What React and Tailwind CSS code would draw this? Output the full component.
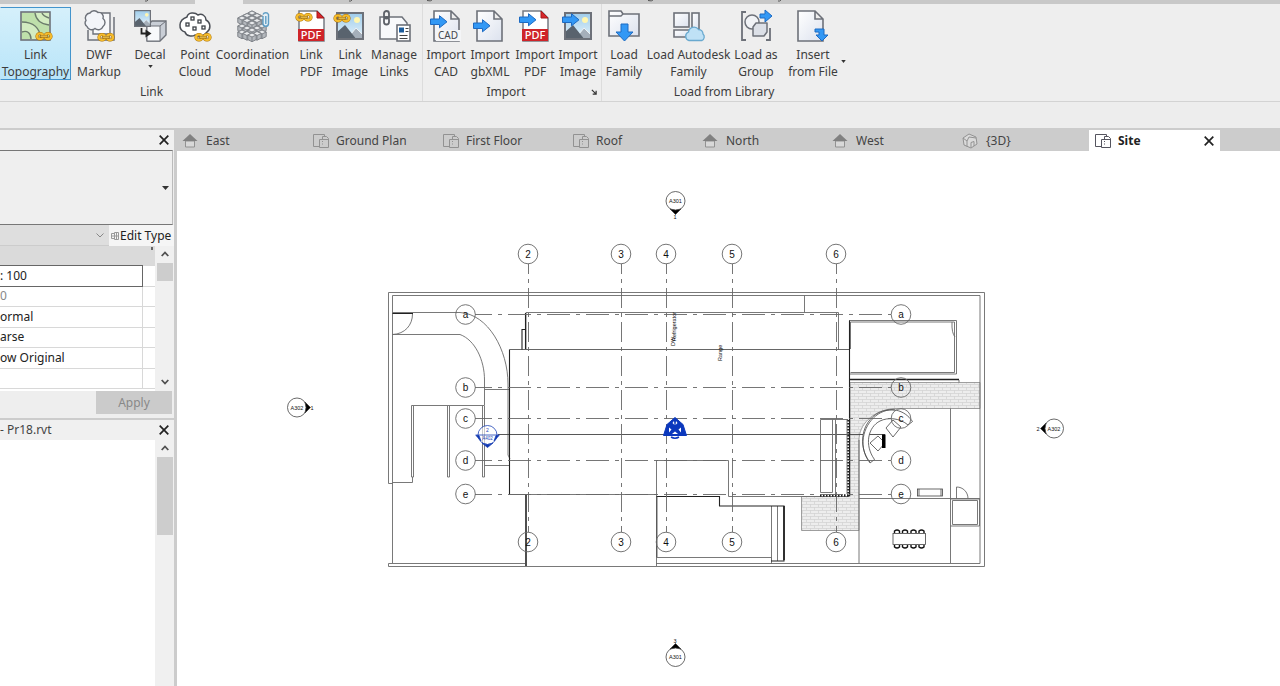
import React from 'react';

const STROKE = '#6d7179';

function Chain({ x = 0, y = 0 }) {
    return (
        <g transform={`translate(${x} ${y})`} fill="none">
            <g stroke="#a8700a" strokeWidth="3.2">
                <rect x="1" y="1.500" width="6" height="5.500" rx="2.700" />
                <rect x="9" y="1.500" width="6" height="5.500" rx="2.700" />
            </g>
            <g stroke="#f6bd2d" strokeWidth="2.200">
                <rect x="1" y="1.500" width="6" height="5.500" rx="2.700" />
                <rect x="9" y="1.500" width="6" height="5.500" rx="2.700" />
            </g>
            <path d="M5 4.200h6" stroke="#8a5c08" strokeWidth="2.600" strokeLinecap="round" />
            <path d="M5 4.200h6" stroke="#fad25c" strokeWidth="1.200" strokeLinecap="round" />
        </g>
    );
}

function BlueArrow({ x = 0, y = 0 }) {
    return (
        <path
            transform={`translate(${x} ${y})`}
            d="M.5 4h9V.7L17 6.8l-7.5 6V9.5h-9z"
            fill="#3298f5"
            stroke="#1d6ac2"
        />
    );
}

function Landscape({ x = 2, y = 2, w = 28, h = 28 }) {
    return (
        <svg x={x} y={y} width={w} height={h} viewBox="0 0 28 28">
            <rect width="28" height="28" fill="url(#sky)" />
            <circle cx="21" cy="8" r="3" fill="#fff6b0" />
            <path d="M10 28l10-12 8 8v4z" fill="#a5afba" stroke="#eef2f5" />
            <path d="M0 21l9-8 12 15H0z" fill="#59636e" />
            <rect x="1" y="1" width="26" height="26" fill="none" stroke={STROKE} strokeWidth="2" />
        </svg>
    );
}

function PdfPage() {
    return (
        <g>
            <path d="M4 1h18l7 7v23H4z" fill="#fff" stroke="#777b82" strokeWidth="1.5" />
            <path d="M22 1l7 7h-7z" fill="#d8272b" stroke="#a51a1d" />
            <rect x="3" y="19" width="26" height="12" fill="#cf2429" />
            <text x="16" y="29" textAnchor="middle" fontSize="11" fontFamily="Noto Sans, sans-serif" fontWeight="500" fill="#fff">PDF</text>
        </g>
    );
}

function BlankPage({ x = 4 }) {
    return (
        <path
            transform={`translate(${x} 0)`}
            d="M1 1h17l8 8v22H1zM18 1v8h8"
            fill="url(#paper)"
            stroke={STROKE}
            strokeWidth="1.6"
        />
    );
}

function Cube({ x, y }) {
    return (
        <g transform={`translate(${x} ${y})`} stroke="#7f8389" strokeWidth="1" strokeLinejoin="round">
            <path d="M0 0l4.200 2v4.600L0 8.700l-4.200-2.100V2z" fill="#b4b8bd" />
            <path d="M0 0l4.200 2L0 4l-4.200-2z" fill="#e8eaec" />
            <path d="M0 4v4.700" />
        </g>
    );
}

const cubes = [
    [15, 1], [10, 3.500], [20, 3.500], [5, 6], [15, 6], [25, 6], [10, 8.500], [20, 8.500], [15, 11],
    [5, 14], [25, 14], [10, 16], [20, 16], [15, 18],
    [5, 20], [25, 20], [10, 21.500], [20, 21.500], [15, 23],
];

const icons = {
    topography: (
        <>
            <rect x="1" y="2" width="29" height="28" fill="#d3ecc1" stroke={STROKE} strokeWidth="1.6" />
            <path d="M2 3h13c1 7 6 11 14 12v14h-8C20 18 13 12 2 12z" fill="#bfe0ab" />
            <path d="M2 22c5-2 9 1 9 7H2z" fill="#bfe0ab" />
            <path d="M2 12c11 0 18 6 19 17M15 3c1 7 6 11 14 12M2 22c5-2 9 1 9 7M22 3c1 3 4 4 7 5" fill="none" stroke="#6b7b6b" strokeWidth="1.4" />
            <Chain x={16} y={22} />
        </>
    ),
    dwf: (
        <>
            <path d="M10 3h17v21H10z" fill="#f7f8fa" stroke={STROKE} strokeWidth="1.4" />
            <path d="M31 7v23H5V20" fill="none" stroke={STROKE} strokeWidth="1.5" />
            <path d="M7 3a5 5 0 0 1 8-.5 4.500 4.500 0 0 1 5 6 5 5 0 0 1 0 8 5 5 0 0 1-8 2 5 5 0 0 1-8-2 4 4 0 0 1-1-6 5 5 0 0 1 4-7.500z" fill="#f3f5f9" stroke={STROKE} strokeWidth="1.4" />
            <Chain x={15} y={23} />
        </>
    ),
    decal: (
        <>
            <path d="M13 16l5-5h14v14l-6 6H13z" fill="#c9ced6" stroke={STROKE} strokeWidth="1.4" />
            <path d="M13 16h13v15H13z" fill="#f8f9fb" stroke={STROKE} />
            <path d="M26 16l6-5" stroke={STROKE} />
            <Landscape x={0} y={0} w={17} h={17} />
            <path d="M7.500 18v5.500h5" fill="none" stroke="#222" strokeWidth="1.8" />
            <path d="M11.500 19.500l6 4-6 4z" fill="#222" />
        </>
    ),
    cloud: (
        <>
            <path d="M8 7c1-5 8-5 11-2 4-2 8 1 8 5 5 3 5 9 1 12-3 5-9 5-12 3-3 2-9 1-10-3-7-2-7-12 2-15z" fill="#fff" stroke="#4b4f56" strokeWidth="1.5" />
            <g fill="#fff" stroke="#3e4248" strokeWidth="1.3">
                <rect x="12" y="7" width="3" height="3" />
                <rect x="19" y="10" width="3" height="3" />
                <rect x="7" y="13" width="3" height="3" />
                <rect x="14" y="17" width="3" height="3" />
                <rect x="23" y="16" width="3" height="3" />
            </g>
            <Chain x={16} y={23} />
        </>
    ),
    coordination: (
        <>
            {cubes.map(([x, y]) => (
                <Cube key={`${x}-${y}`} x={x} y={y} />
            ))}
            <path d="M26 6v8a2.800 2.800 0 0 0 5.500 0V4.500a3 3 0 0 0-5.500 0z" fill="#e6f0f6" />
            <path d="M26 6v8a2.800 2.800 0 0 0 5.500 0V4.500a3 3 0 0 0-5.500 0M28.800 6v8" fill="none" stroke="#5f9dc4" strokeWidth="1.4" />
        </>
    ),
    linkPdf: (
        <>
            <PdfPage />
            <Chain x={1} y={3} />
        </>
    ),
    linkImage: (
        <>
            <Landscape />
            <Chain x={0} y={4} />
        </>
    ),
    manage: (
        <>
            <path d="M2 7h22l5 6v16H2z" fill="#f8f9fb" stroke={STROKE} strokeWidth="1.5" />
            <g fill="none" stroke="#5d6168" strokeWidth="1.800">
                <rect x="6" y="1" width="5" height="7.500" rx="2.500" />
                <rect x="6" y="7" width="5" height="7.500" rx="2.500" />
            </g>
            <rect x="19" y="15" width="13" height="16" fill="#fff" stroke={STROKE} strokeWidth="1.6" />
            <path d="M21 17.500h5v5h-5z" fill="#1d5d9c" />
            <path d="M27.500 18.500h3M27.500 21.500h3M21.500 25.500h8M21.500 28.500h8" stroke="#444" />
        </>
    ),
    importCad: (
        <>
            <BlankPage x={3} />
            <rect x="6" y="20" width="25" height="11" fill="#f4f5f7" />
            <text x="18" y="29" textAnchor="middle" fontSize="10" fontFamily="Noto Sans, sans-serif" fill="#44484e">CAD</text>
            <BlueArrow x={0} y={5} />
        </>
    ),
    importXml: (
        <>
            <BlankPage x={2} />
            <BlueArrow x={-1} y={9} />
        </>
    ),
    importPdf: (
        <>
            <PdfPage />
            <BlueArrow x={0} y={3} />
        </>
    ),
    importImage: (
        <>
            <Landscape />
            <BlueArrow x={0} y={3} />
        </>
    ),
    loadFamily: (
        <>
            <path d="M1 1h12l2 3h16v22H1z" fill="url(#paper)" stroke={STROKE} strokeWidth="1.6" />
            <path d="M1 6h12l2-2" fill="none" stroke={STROKE} strokeWidth="1.300" />
            <path d="M13 14h7v8h5l-8.500 9L8 22h5z" fill="#3298f5" stroke="#1d6ac2" />
        </>
    ),
    autodesk: (
        <>
            <g fill="url(#paper)" stroke={STROKE} strokeWidth="1.600">
                <rect x="1" y="3" width="15" height="14" />
                <rect x="19" y="3" width="7" height="16" />
                <path d="M1 20h15v7H1z" />
            </g>
            <path d="M16 30.500a4.500 4.500 0 0 1-.5-8.500 5.500 5.500 0 0 1 10-2.500 4.500 4.500 0 0 1 4.500 4.500 4 4 0 0 1-1 6.500z" fill="#bfe1f6" stroke="#69a9cf" strokeWidth="1.300" />
        </>
    ),
    group: (
        <>
            <path d="M6 2H2v28h4M26 30h4V18" fill="none" stroke={STROKE} strokeWidth="1.800" />
            <circle cx="12" cy="12" r="7" fill="#f1f3f6" stroke={STROKE} strokeWidth="1.500" />
            <path d="M13 17l3-4h11v9l-3 4H13z" fill="#dce0e7" stroke={STROKE} strokeWidth="1.500" strokeLinejoin="round" />
            <path d="M20 4h5V0l7 6-7 6V8h-5z" fill="#3298f5" stroke="#1d6ac2" />
        </>
    ),
    insert: (
        <>
            <BlankPage x={0} />
            <path d="M18 19h9v6h4l-6 6-6-6h3v-3h-4z" fill="#3298f5" stroke="#1d6ac2" />
        </>
    ),
};

function RibbonIcon({ name }) {
    return (
        <svg className="h-8 w-8 shrink-0 overflow-visible" viewBox="0 0 32 32" aria-hidden="true">
            {icons[name]}
        </svg>
    );
}

const linkTools = [
    { icon: 'topography', lines: ['Link', 'Topography'], width: 'w-[71px]', active: true },
    { icon: 'dwf', lines: ['DWF', 'Markup'], width: 'w-14' },
    { icon: 'decal', lines: ['Decal'], width: 'w-[46px]', menu: true },
    { icon: 'cloud', lines: ['Point', 'Cloud'], width: 'w-11' },
    { icon: 'coordination', lines: ['Coordination', 'Model'], width: 'w-[71px]' },
    { icon: 'linkPdf', lines: ['Link', 'PDF'], width: 'w-[46px]' },
    { icon: 'linkImage', lines: ['Link', 'Image'], width: 'w-8' },
    { icon: 'manage', lines: ['Manage', 'Links'], width: 'w-14' },
];

const importTools = [
    { icon: 'importCad', lines: ['Import', 'CAD'], width: 'w-[46px]' },
    { icon: 'importXml', lines: ['Import', 'gbXML'], width: 'w-[42px]' },
    { icon: 'importPdf', lines: ['Import', 'PDF'], width: 'w-12' },
    { icon: 'importImage', lines: ['Import', 'Image'], width: 'w-[38px]' },
];

const loadTools = [
    { icon: 'loadFamily', lines: ['Load', 'Family'], width: 'w-11' },
    { icon: 'autodesk', lines: ['Load Autodesk', 'Family'], width: 'w-[85px]' },
    { icon: 'group', lines: ['Load as', 'Group'], width: 'w-[50px]' },
    { icon: 'insert', lines: ['Insert', 'from File'], width: 'w-16' },
];

function Caret({ className = '' }) {
    return (
        <svg className={`h-[3px] w-[5px] shrink-0 ${className}`} viewBox="0 0 6 4" aria-hidden="true">
            <path d="M0 0h6L3 4z" fill="#333" />
        </svg>
    );
}

function ToolButton({ tool }) {
    return (
        <button
            type="button"
            className={`flex h-[73px] shrink-0 flex-col items-center border pt-[2px] ${tool.width} ${tool.active ? 'border-[#4394cc] border-l-transparent bg-linear-to-b from-[#d5f0fb] to-[#b9e5f9]' : 'border-transparent'}`}
        >
            <RibbonIcon name={tool.icon} />
            <span className="mt-[4px] text-center text-[12px] leading-[17px] whitespace-nowrap">
                {tool.lines.map((line) => (
                    <span key={line} className="block">{line}</span>
                ))}
            </span>
            {tool.menu && <Caret className="mt-[2px]" />}
        </button>
    );
}

function ToolGroup({ tools, label, labelClass = 'w-full', children, className = '' }) {
    return (
        <section className={`flex flex-col border-r border-[#dcdcdc] pt-[3px] ${className}`}>
            <div className="flex items-start">
                {tools.map((tool) => (
                    <ToolButton key={tool.icon} tool={tool} />
                ))}
                {tools === loadTools && <Caret className="-ml-1 mt-[53px]" />}
            </div>
            <div className="flex items-center pt-[3px]">
                <h2 className={`text-center text-[12px] leading-[18px] ${labelClass}`}>{label}</h2>
                {children}
            </div>
        </section>
    );
}

function Ribbon() {
    return (
        <div className="flex h-[98px] shrink-0 border-b border-[#d3d3d3] bg-[#eeeeee] text-[#3d3d3d]">
            <ToolGroup tools={linkTools} label="Link" labelClass="w-[303px]" />
            <ToolGroup tools={importTools} label="Import" labelClass="w-[166px]" className="pr-1">
                <button type="button" aria-label="Import settings" className="ml-0.5">
                    <svg className="h-[6px] w-[6px]" viewBox="0 0 7 7">
                        <path d="M1 1l5 5M6 2v4H2" fill="none" stroke="#333" strokeWidth="1.4" />
                    </svg>
                </button>
            </ToolGroup>
            <ToolGroup tools={loadTools} label="Load from Library" className="border-r-0" />
        </div>
    );
}

function RibbonTabs() {
    return (
        <div className="h-1 shrink-0 bg-[#c8c8c8]">
            <svg className="block h-1 w-[1280px]" viewBox="0 0 1280 4" aria-hidden="true">
                <path d="M195 0h48v4h-48z" fill="#eeeeee" />
                <path d="M148 0q-1 1.500-3 1M352 0q-1 1.500-3 1M432 0q-1 1.500-5 .5M653 0q-1 1.500-5 .5M781 0q-1 1.500-3 1" fill="none" stroke="#555" />
            </svg>
        </div>
    );
}

function TabIcon({ type, active }) {
    const color = active ? '#55555f' : '#929292';
    if (type === 'house') {
        return (
            <svg className="h-4 w-4" viewBox="0 0 16 16" aria-hidden="true">
                <path d="M3.500 8h9v6h-9z" fill="#d8d8d8" stroke={color} />
                <path d="M8 1l7.500 7h-15z" fill="#808080" />
            </svg>
        );
    }
    if (type === 'cube') {
        return (
            <svg className="h-4 w-4" viewBox="0 0 16 16" aria-hidden="true">
                <path d="M1 5l6-4 7 3 1 7-6 4-7-3z" fill="#dadada" stroke={color} />
                <path d="M1 5l4 3 2-4 7 1M5 8v5.500M9 14.500v-5l3-1v4.500" fill="none" stroke={color} />
            </svg>
        );
    }
    return (
        <svg className="h-4 w-[18px]" viewBox="0 0 18 16" fill="none" stroke={color} aria-hidden="true">
            <path d="M7.500 13.500H1.500v-12h11v2" />
            <path d="M7.500 6.500v8h9v-9l-2-2h-4v3" />
            <path d="M7.500 6.500h9" />
            <path d="M10.500 8v5" strokeDasharray="1 1.500" />
        </svg>
    );
}

function CloseIcon() {
    return (
        <svg className="h-[10px] w-[10px]" viewBox="0 0 10 10" aria-hidden="true">
            <path d="M.7.7l8.600 8.600M9.300.7L.7 9.300" stroke="#222" strokeWidth="1.700" />
        </svg>
    );
}

const viewTabs = [
    { label: 'East', type: 'house' },
    { label: 'Ground Plan', type: 'plan' },
    { label: 'First Floor', type: 'plan' },
    { label: 'Roof', type: 'plan' },
    { label: 'North', type: 'house' },
    { label: 'West', type: 'house' },
    { label: '{3D}', type: 'cube' },
    { label: 'Site', type: 'plan', active: true },
];

function ViewTabs() {
    return (
        <div role="tablist" className="flex h-[23px] shrink-0 bg-[#cccccc] pt-[2px] pl-[2px] text-[12px] text-[#444]">
            {viewTabs.map((tab) => (
                <div key={tab.label} className={`flex shrink-0 items-center pr-1.5 ${tab.active ? 'w-[131px] bg-white pl-[5px] text-[#222]' : 'w-[130px] pl-[3px]'}`}>
                    <button type="button" role="tab" aria-selected={!!tab.active} className={`flex flex-1 items-center text-left ${tab.active ? 'font-bold' : ''}`}>
                        <span className="flex w-6 justify-start"><TabIcon type={tab.type} active={tab.active} /></span>
                        {tab.label}
                    </button>
                    {tab.active && <button type="button" aria-label="Close Site"><CloseIcon /></button>}
                </div>
            ))}
        </div>
    );
}

function Chevron({ up = false, className = '' }) {
    return (
        <svg className={`h-[6px] w-[8px] ${className}`} viewBox="0 0 8 6" aria-hidden="true">
            <path d={up ? 'M.7 5L4 1.500 7.300 5' : 'M.7 1L4 4.500 7.300 1'} fill="none" stroke="#505050" strokeWidth="1.800" />
        </svg>
    );
}

const properties = [
    { value: ': 100', boxed: true },
    { value: '0', muted: true },
    { value: 'ormal' },
    { value: 'arse' },
    { value: 'ow Original' },
    { value: '\u00a0' },
];

function PanelTitle({ children, name }) {
    return (
        <div className="flex h-5 shrink-0 items-center justify-between bg-[#f0f0f0] pr-[5px] text-[12px] text-[#444]">
            <h2>{children}</h2>
            <button type="button" aria-label={`Close ${name}`}><CloseIcon /></button>
        </div>
    );
}

function Sidebar() {
    return (
        <aside className="flex w-[174px] shrink-0 flex-col bg-[#eeeeee] text-[12px] text-[#222]">
            <PanelTitle name="properties" />
            <button type="button" aria-label="Type selector" className="mr-px flex h-[75px] shrink-0 items-center justify-end border-y border-r border-[#777] border-r-[#bbb] bg-[#efefef] pr-[3px]">
                <svg className="h-[4px] w-[7px]" viewBox="0 0 7 4"><path d="M0 0h7L3.500 4z" fill="#333" /></svg>
            </button>
            <div className="flex h-[21px] shrink-0">
                <button type="button" aria-label="View" className="flex w-[109px] items-center justify-end border-b border-[#ccc] bg-[#dedede] pr-[5px]">
                    <svg className="h-[5px] w-[8px]" viewBox="0 0 8 5"><path d="M.5.500L4 4 7.500.5" fill="none" stroke="#888" /></svg>
                </button>
                <button type="button" className="flex flex-1 items-center gap-[1px] bg-[#f5f5f5] pl-[2px] leading-5 whitespace-nowrap">
                    <svg className="h-[8px] w-[8px]" viewBox="0 0 8 8" fill="none" stroke="#999">
                        <path d="M3 1.500H.5v5H3M3.500.5h4v7h-4zM1 4h6.500M5.500 1v6" />
                    </svg>
                    Edit Type
                </button>
            </div>
            <div className="flex h-[145px] shrink-0">
                <div className="flex w-[155px] flex-col bg-white">
                    <div className="flex h-[19px] shrink-0 justify-end bg-[#dadada] pt-[1px] pr-[2px]">
                        <span className="h-[3px] w-[2px] bg-[#666]" />
                    </div>
                    <table className="h-[124px] w-full border-collapse">
                        <tbody>
                            {properties.map((row, i) => (
                                <tr key={i}>
                                    <td className={`w-[142px] border p-0 leading-4 whitespace-nowrap ${row.boxed ? 'border-[#666]' : 'border-[#d8d8d8]'} border-l-0 ${row.muted ? 'text-[#888]' : ''}`}>{row.value}</td>
                                    <td className="border-y border-[#d8d8d8] p-0" />
                                </tr>
                            ))}
                        </tbody>
                    </table>
                </div>
                <div className="flex flex-1 flex-col items-center bg-[#f0f0f0] pt-[5px] pb-[6px]">
                    <Chevron up />
                    <span className="mt-[6px] h-[18px] w-4 bg-[#cdcdcd]" />
                    <Chevron className="mt-auto" />
                </div>
            </div>
            <div className="flex h-[27px] shrink-0 justify-end pr-[2px]">
                <button type="button" disabled className="h-[23px] w-[76px] bg-[#cbcbcb] text-[#888]">Apply</button>
            </div>
            <div className="h-[2px] shrink-0 bg-[#cccccc]" />
            <PanelTitle name="project browser">- Pr18.rvt</PanelTitle>
            <div className="flex min-h-0 flex-1 bg-white">
                <div className="ml-auto flex w-[19px] flex-col items-center bg-[#f0f0f0] pt-[5px]">
                    <Chevron up />
                    <span className="mt-[6px] h-[78px] w-4 bg-[#cdcdcd]" />
                </div>
            </div>
        </aside>
    );
}

const columns = [['2', 528], ['3', 621], ['4', 666], ['5', 732], ['6', 836]];
const rows = [['a', 314.5], ['b', 387.5], ['c', 418.5], ['d', 460.5], ['e', 494]];

function Bubble({ x, y, label }) {
    return (
        <g>
            <circle cx={x} cy={y} r="9.800" fill="none" />
            <text x={x} y={y + 3.5} textAnchor="middle" fontSize="10" fill="#111" stroke="none">{label}</text>
        </g>
    );
}

function Marker({ x, y, label, number, angle, nx, ny }) {
    return (
        <g>
            <circle cx={x} cy={y} r="9.500" fill="#fff" />
            <path transform={`rotate(${angle} ${x} ${y})`} d={`M${x + 8} ${y - 5.5}L${x + 13.5} ${y}L${x + 8} ${y + 5.5}Q${x + 10} ${y} ${x + 8} ${y - 5.5}z`} fill="#000" />
            <text x={x} y={y + 2} textAnchor="middle" fontSize="5.500" fill="#111" stroke="none">{label}</text>
            <text x={nx} y={ny} textAnchor="middle" fontSize="5.500" fill="#111" stroke="none">{number}</text>
        </g>
    );
}

function SitePlan() {
    return (
        <svg className="h-full w-full" viewBox="177 151 1103 535" fontFamily="Liberation Sans, Arial, sans-serif" role="img" aria-label="Site plan">
            <defs>
                <pattern id="brick" width="8" height="6" patternUnits="userSpaceOnUse">
                    <rect width="8" height="6" fill="#ededed" />
                    <path d="M0 .500h8M0 3.500h8M2.500 0v3M6.500 3v3" stroke="#d4d4d4" strokeWidth=".8" />
                </pattern>
            </defs>

            {/* paving */}
            <path d="M850 382.500H980V408.500H893C872 411 859 425 859 440V530.500H801.500V496.500H850z" fill="url(#brick)" stroke="#888" strokeWidth=".8" />

            {/* boundary walls and rooms */}
            <g fill="none" stroke="#6a6a6a" strokeWidth=".9">
                <path d="M392.500 483.500H388.500V292.500H984.500V566.500H388.500V563.500H525" />
                <path d="M392.500 563V295.500H980V563.500H771" />
                <path d="M392.500 312.500H460C488 314 508 350 508 384V455L510 459" />
                <path d="M392.500 334.500H460C475 340 484.500 360 484.500 380V405.500" />
                <path d="M392.500 334.500C405 334 412.500 325 412.500 314" />
                <path d="M484.500 405.500H411.500V477H413.500V406M447.500 406V477H449.500V406M482.500 406V477H484.500V406M412.500 477V482.500H392.500" />
                <path d="M484.500 389.500H509M484.500 465.500H509" />
                <path d="M526 349.500V312.500H838.500V349.500M804.500 295.500V312.500" />
                <path d="M656.500 566V460.500H728.500V496.500H849M509 494.500H656" />
                <path d="M656 557.500H771.500V563.500H656M771.500 506V561M777.500 506V561" />
                <path d="M498 434.500H885" stroke="#444" />
                <path d="M820.500 419.500H848M820.500 419.500V492.500H832.500V419.500M835.500 419.500V496M847 419.500V494" />
                <path d="M849 320.500H956.500V374H849M850.500 349V322H954.500V372.500H850.500M952 322Q951.500 333 955 337" />
                <path d="M959 380V382.500" />
                <path d="M950.500 408.500V563M859 440V563M859 498.500H980" />
                <path d="M950.500 499H979.500V526H950.500M952.500 500.500H977.500V524.500H952.500z" />
                <path d="M956.500 498.500V487C963 487 968 492 968 498.500" />
            </g>
            <g fill="none" stroke="#222" strokeWidth="1.100">
                <path d="M509.500 494.500V349.500" />
                <path d="M509.500 349.500H849.500" stroke="#555" strokeWidth=".9" />
                <path d="M849.500 320.500V349.500V496" />
                <path d="M392.500 313.500H413M525.500 329.500H522V349.500M525.500 313V349" />
                <path d="M526 494.500V566" strokeWidth="1.600" />
                <path d="M656.500 496.500H719.500V506H784V561H771" />
                <path d="M784 506V560M849 379.500H959" strokeWidth="1.700" />
                <path d="M657 497V557" strokeWidth=".7" />
                <path d="M848.500 420V496M820 495.500H849" strokeDasharray="1.500 1.500" strokeWidth="2.500" />
            </g>

            {/* furniture */}
            <g fill="none" stroke="#444" strokeWidth=".8">
                <path d="M912.500 421.500C904 409 890 407 878 413C862 422 857 445 870 463L874.500 459.500C864 445 868 427 880 421C888 417 900 418 908 425z" fill="#fff" />
                <path d="M895 410C879 408 864 423 863 441C862.500 450 866 458 870 462" />
                <path d="M878 436L885 443L878 451L870 443zM893 420L901 427L893 437L886 428z" />
                <rect x="917.500" y="489" width="25" height="7" />
                <path d="M919 489V496M941 489V496" />
                <rect x="893" y="533.500" width="32.500" height="11" />
            </g>
            <rect x="882" y="434.500" width="3.500" height="13.500" fill="#000" />
            <g fill="none" stroke="#111" strokeWidth="1.400">
                {[897, 905, 913.5, 921.5].map((x) => (
                    <path key={x} d={`M${x - 2.500} 533V531Q${x} 529 ${x + 2.500} 531V533M${x - 2.500} 545V547Q${x} 549 ${x + 2.500} 547V545`} />
                ))}
            </g>

            {/* grids */}
            <g stroke="#666" strokeWidth=".9">
                {columns.map(([label, x]) => (
                    <g key={label}>
                        <path d={`M${x + 0.5} 264V532`} strokeDasharray="20 5 4 5" strokeDashoffset="10" />
                        <Bubble x={x} y={254} label={label} />
                        <Bubble x={x} y={542} label={label} />
                    </g>
                ))}
                {rows.map(([label, y]) => (
                    <g key={label}>
                        <path d={`M475 ${Math.floor(y) + 0.5}H891`} strokeDasharray="23 6 4 6" strokeDashoffset="6" />
                        <Bubble x={465.5} y={y} label={label} />
                        <Bubble x={901} y={y} label={label} />
                    </g>
                ))}
            </g>

            <g stroke="#444" strokeWidth=".8">
                <Marker x={675.5} y={201} angle={90} label="A301" number="1" nx={675} ny={219} />
                <Marker x={675.5} y={657} angle={270} label="A301" number="3" nx={675} ny={643} />
                <Marker x={297} y={407.5} angle={0} label="A302" number="1" nx={312} ny={409.5} />
                <Marker x={1054} y={428.5} angle={180} label="A302" number="2" nx={1038} ny={430.5} />
            </g>

            <g fontSize="5.500" fill="#111">
                <text transform="translate(676 341) rotate(-90)">Refrigerator</text>
                <text transform="translate(674.500 346) rotate(-90)">DW</text>
                <text transform="translate(722 361) rotate(-90)">Range</text>
            </g>

            {/* selected section head */}
            <g stroke="#1d43b5" strokeWidth=".8">
                <circle cx="487.500" cy="435" r="9.500" fill="#fff" fillOpacity=".6" />
                <path d="M475.500 435H499.500" />
                <path d="M476 435.500H479L481 441L476 435.500M499 435.500H496L494 441zM482 443Q487.500 446 493 443L487.500 447.500z" fill="#0d35b3" />
                <text x="487.500" y="432" textAnchor="middle" fontSize="5" fill="#1d43b5" stroke="none">2</text>
                <text x="487.500" y="440" textAnchor="middle" fontSize="4.500" fill="#1d43b5" stroke="none">A402</text>
            </g>

            {/* survey and base point */}
            <g stroke="#0b38bd" strokeLinejoin="round">
                <path d="M675 417.500L683 424.500L686.500 435.500H663.500L667 424.500z" fill="#0b38bd" />
                <path d="M671 437Q675 439.500 679 437" fill="none" strokeWidth="1.500" />
                <g fill="#fff" stroke="none">
                    <path d="M672.500 423L674 421L674.500 425zM677.500 423L676 421L675.500 425z" />
                    <path d="M669 427.500L671.500 429.500L669 432.500zM681 427.500L678.500 429.500L681 432.500z" />
                    <path d="M672 434L675 431.500L678 434z" />
                </g>
            </g>
        </svg>
    );
}

export default function App() {
    return (
        <div className="flex h-screen flex-col overflow-hidden bg-[#ededed] font-['Noto_Sans','Open_Sans',sans-serif]">
            <svg className="absolute h-0 w-0" aria-hidden="true">
                <defs>
                    <linearGradient id="sky" x2="0" y2="1">
                        <stop stopColor="#9ccbea" />
                        <stop offset="1" stopColor="#e8f5fc" />
                    </linearGradient>
                    <linearGradient id="paper" x2="1" y2="1">
                        <stop stopColor="#ffffff" />
                        <stop offset="1" stopColor="#dce2ee" />
                    </linearGradient>
                </defs>
            </svg>
            <RibbonTabs />
            <Ribbon />
            <div className="mt-[26px] flex min-h-0 flex-1">
                <div className="flex border-t-2 border-r-[3px] border-[#cccccc]">
                    <Sidebar />
                </div>
                <main className="flex min-w-0 flex-1 flex-col bg-white">
                    <ViewTabs />
                    <div className="min-h-0 flex-1">
                        <SitePlan />
                    </div>
                </main>
            </div>
        </div>
    );
}
